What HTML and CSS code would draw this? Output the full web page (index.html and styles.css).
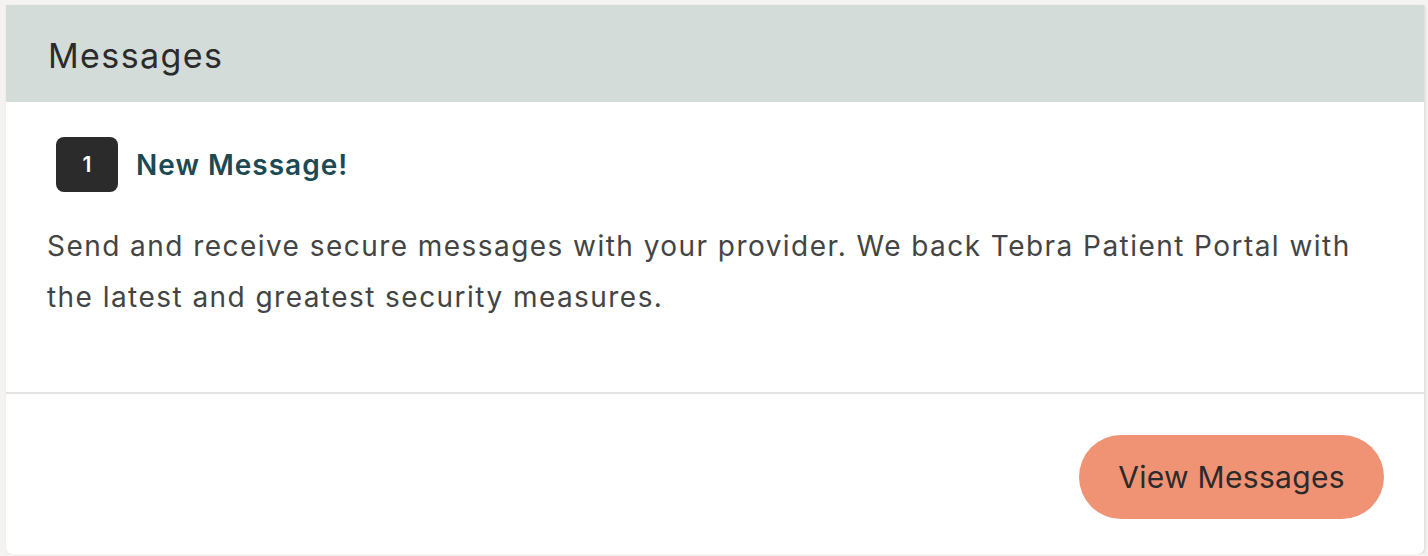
FILE: index.html
```html
<!DOCTYPE html>
<html lang="en">
<head>
    <meta charset="UTF-8">
    <meta name="viewport" content="width=device-width, initial-scale=1.0">
    <title>Messages</title>
    <link rel="stylesheet" href="styles.css">
</head>
<body>
    <div class="card">
        <div class="card-header">
            <h2>Messages</h2>
        </div>
        <div class="card-body">
            <div class="new-message">
                <span class="badge">1</span>
                <span class="new-label">New Message!</span>
            </div>
            <p>Send and receive secure messages with your provider. We back Tebra Patient Portal with the latest and greatest security measures.</p>
        </div>
        <div class="card-footer">
            <button class="btn-view">View Messages</button>
        </div>
    </div>
</body>
</html>
```

FILE: styles.css
```css
body {
    font-family: 'Inter', 'Noto Sans', sans-serif;
    margin: 0;
    padding: 5px 4px 0 6px;
    background-color: #f5f3f1;
    color: #2b2b2b;
}
.card {
    background-color: #fff;
    border-radius: 0 0 6px 6px;
    box-shadow: 1px 1px 3px rgba(0,0,0,0.12);
    height: 549px;
    display: flex;
    flex-direction: column;
    overflow: hidden;
}
.card-header {
    background-color: #d3dcd9;
    height: 97px;
    box-sizing: border-box;
    display: flex;
    align-items: center;
    padding: 4px 0 0 42px;
}
.card-header h2 {
    margin: 0;
    font-size: 34px;
    font-weight: 400;
    letter-spacing: 1.4px;
    color: #2b2b2b;
}
.card-body {
    padding: 35px 42px 0 41px;
    height: 255px;
    border-bottom: 2px solid #e4e4e4;
}
.new-message {
    display: flex;
    align-items: center;
    gap: 18px;
    padding-left: 9px;
}
.badge {
    width: 62px;
    height: 55px;
    border-radius: 8px;
    background-color: #2b2b2b;
    color: #fff;
    font-size: 21px;
    font-weight: 600;
    display: flex;
    justify-content: center;
    align-items: center;
}
.new-label {
    font-size: 28px;
    font-weight: 600;
    letter-spacing: 1px;
    color: #1d4a52;
}
.card-body p {
    margin: 29px 0 0;
    font-size: 28px;
    line-height: 51px;
    letter-spacing: 1.45px;
    color: #444;
}
.card-footer {
    flex: 1;
    display: flex;
    justify-content: flex-end;
    align-items: flex-start;
    padding: 41px 40px 0 0;
}
.btn-view {
    font-family: inherit;
    width: 305px;
    height: 84px;
    border: none;
    border-radius: 42px;
    background-color: #f09274;
    color: #2b2b2b;
    font-size: 30px;
    letter-spacing: 0.3px;
    cursor: pointer;
}
```
